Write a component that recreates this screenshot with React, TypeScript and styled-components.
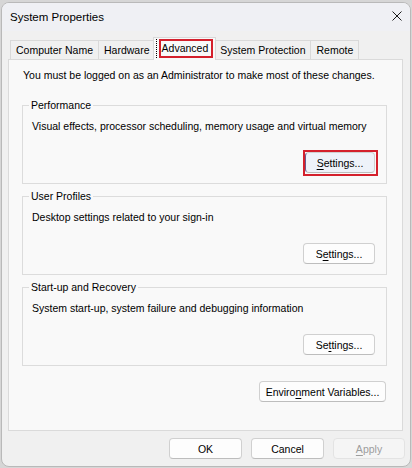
import React from "react";
import styled, { createGlobalStyle } from "styled-components";

const GlobalStyle = createGlobalStyle`
	html, body {
		margin: 0;
		padding: 0;
		background: #d6d6d6;
	}
	body {
		font-family: "Liberation Sans", Arial, sans-serif;
		font-size: 10.5px;
		color: #000;
	}
	* {
		box-sizing: border-box;
	}
`;

/* Window frame */
const Window = styled.div`
	margin: 2px 0 0 1px;
	width: 410px;
	height: 465px;
	display: flex;
	flex-direction: column;
	background: #f0f0f0;
	border: 1px solid #b9b9b9;
	border-radius: 8px;
	overflow: hidden;
	white-space: nowrap;
`;

const TitleBar = styled.div`
	height: 28px;
	display: flex;
	align-items: center;
	justify-content: space-between;
	padding: 0 8px 0 8px;
	background: #eff0f4;
`;

const Title = styled.div`
	font-size: 11.5px;
	line-height: 16px;
`;

const CloseButton = styled.div`
	width: 10px;
	height: 10px;
	display: flex;
	margin-top: -2px;
`;

const Body = styled.div`
	padding: 6px 7px 0 6px;
`;

/* Tabs */
const TabRow = styled.div`
	height: 22px;
	display: flex;
	align-items: flex-end;
	padding-left: 2px;
`;

const Tab = styled.div<{ selected?: boolean }>`
	position: relative;
	height: ${({ selected }) => (selected ? "23px" : "19px")};
	margin: ${({ selected }) => (selected ? "0 -2px -1px -2px" : "0 -1px 0 0")};
	padding: ${({ selected }) => (selected ? "1px 2px 0 2px" : "0 5px")};
	display: flex;
	align-items: ${({ selected }) => (selected ? "flex-start" : "center")};
	background: ${({ selected }) => (selected ? "#f9f9f9" : "#f0f0f0")};
	border: 1px solid #d9d9d9;
	border-bottom: none;
	z-index: ${({ selected }) => (selected ? 1 : 0)};
	line-height: 16px;
`;

const FocusLabel = styled.span`
	border-left: 1px dotted #000;
	padding-left: 2px;
`;

const Highlight = styled.span`
	display: inline-block;
	border: 2px solid #d4202c;
	padding: 0 3px 0 1px;
	line-height: 15px;
`;

const Panel = styled.div`
	height: 372px;
	background: #f9f9f9;
	border: 1px solid #dadada;
	padding: 7px 15px 0 13px;
`;

const Notice = styled.div`
	line-height: 16px;
	padding-left: 1px;
`;

/* Group boxes */
const Group = styled.fieldset<{ first?: boolean }>`
	margin: ${({ first }) => (first ? "14px" : "4px")} 0 0 0;
	min-width: 0;
	border: 1px solid #dcdcdc;
	padding: 5px 11px 10px 9px;
`;

const GroupTitle = styled.legend`
	margin-left: -3px;
	padding: 0 2px;
	line-height: 16px;
`;

const GroupText = styled.div`
	line-height: 16px;
`;

const ButtonRow = styled.div<{ top: number; right?: number }>`
	display: flex;
	justify-content: flex-end;
	margin-top: ${({ top }) => top}px;
	margin-right: ${({ right }) => right ?? 0}px;
`;

const FocusFrame = styled.span`
	display: flex;
	margin: -2px -3px -3px 0;
	padding: 0 1px 1px 0;
	border: 2px solid #d4202c;
`;

const Button = styled.button<{ width: number; focused?: boolean }>`
	width: ${({ width }) => width}px;
	height: 21px;
	padding: 0;
	font: inherit;
	color: ${({ disabled }) => (disabled ? "#9d9d9d" : "#000")};
	background: ${({ focused, disabled }) => (focused ? "#eef2f9" : disabled ? "#f5f5f5" : "#fdfdfd")};
	border: 1px solid ${({ disabled }) => (disabled ? "#e3e3e3" : "#d0d0d0")};
	border-bottom-color: ${({ disabled }) => (disabled ? "#e3e3e3" : "#bdbdbd")};
	border-left-color: ${({ focused }) => (focused ? "#6a5a8c" : undefined)};
	border-radius: 4px;
	line-height: 16px;

	u {
		text-underline-offset: 2px;
	}
`;

const Footer = styled.div`
	display: flex;
	justify-content: flex-end;
	gap: 9px;
	padding: 7px 5px 0 0;
`;

interface SectionProps {
	title: string;
	text: string;
	first?: boolean;
	top: number;
	children: React.ReactNode;
}

function Section({ title, text, first, top, children }: SectionProps) {
	return (
		<Group first={first}>
			<GroupTitle>{title}</GroupTitle>
			<GroupText>{text}</GroupText>
			<ButtonRow top={top}>{children}</ButtonRow>
		</Group>
	);
}

export default function App() {
	return (
		<React.Fragment>
			<GlobalStyle />
			<Window>
				<TitleBar>
					<Title>System Properties</Title>
					<CloseButton>
						<svg width="10" height="10" viewBox="0 0 10 10">
							<path d="M0.5 0.5 L9.5 9.5 M9.5 0.5 L0.5 9.5" stroke="#1b1b1b" strokeWidth="1" fill="none" />
						</svg>
					</CloseButton>
				</TitleBar>
				<Body>
					<TabRow>
						<Tab>Computer Name</Tab>
						<Tab>Hardware</Tab>
						<Tab selected>
							<FocusLabel>
								<Highlight>Advanced</Highlight>
							</FocusLabel>
						</Tab>
						<Tab>System Protection</Tab>
						<Tab>Remote</Tab>
					</TabRow>
					<Panel>
						<Notice>You must be logged on as an Administrator to make most of these changes.</Notice>
						<Section first title="Performance" text="Visual effects, processor scheduling, memory usage and virtual memory" top={18}>
							<FocusFrame>
								<Button width={70} focused>
									<u>S</u>ettings...
								</Button>
							</FocusFrame>
						</Section>
						<Section title="User Profiles" text="Desktop settings related to your sign-in" top={18}>
							<Button width={72}>
								S<u>e</u>ttings...
							</Button>
						</Section>
						<Section title="Start-up and Recovery" text="System start-up, system failure and debugging information" top={18}>
							<Button width={72}>
								Se<u>t</u>tings...
							</Button>
						</Section>
						<ButtonRow top={15} right={1}>
							<Button width={127}>
								Enviro<u>n</u>ment Variables...
							</Button>
						</ButtonRow>
					</Panel>
				</Body>
				<Footer>
					<Button width={73}>OK</Button>
					<Button width={73}>Cancel</Button>
					<Button width={72} disabled>
						<u>A</u>pply
					</Button>
				</Footer>
			</Window>
		</React.Fragment>
	);
}
